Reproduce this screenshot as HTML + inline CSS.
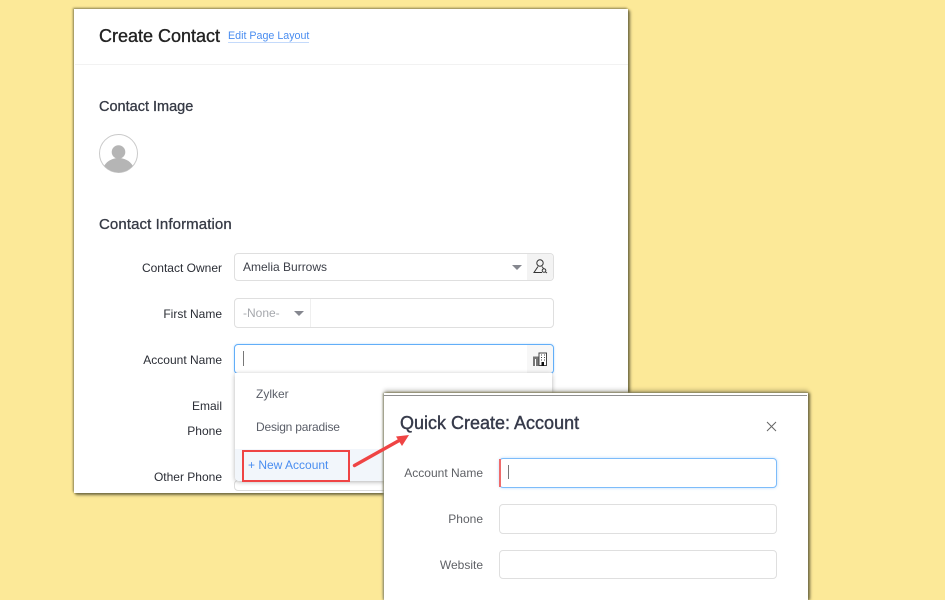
<!DOCTYPE html>
<html><head><meta charset="utf-8">
<style>
html,body{margin:0;padding:0;width:945px;height:600px;overflow:hidden;}
body{background:#fce998;position:relative;font-family:"Liberation Sans",sans-serif;}
.a{position:absolute;white-space:nowrap;}
.card{left:74px;top:9px;width:554px;height:484px;background:#fff;box-shadow:-1px -1px 2px #8d8454,1px 1px 2px #6f6840,2px 2px 3px #8d8454;}
.l{font-size:12px;color:#2a2d35;text-align:right;width:140px;left:82px;line-height:16px;}
.f{border:1px solid #dfdfdf;border-radius:4px;background:#fff;box-sizing:border-box;}
.h{color:#363a45;font-weight:400;-webkit-text-stroke:.3px #363a45;line-height:20px;}
.m{font-size:12px;color:#5a5e68;line-height:16px;}
.q{font-size:12px;color:#5f6166;text-align:right;width:100px;left:383px;line-height:16px;}
</style></head>
<body>
<div class="a card"></div>
<div class="a" style="left:99px;top:25px;font-size:18px;line-height:22px;color:#222;-webkit-text-stroke:.35px #222;">Create Contact</div>
<div class="a" style="left:228px;top:30px;font-size:10.7px;line-height:12px;color:#4a8df0;border-bottom:1px solid #c4dafb;">Edit Page Layout</div>
<div class="a" style="left:75px;top:64px;width:553px;height:1px;background:#f2f2f2;"></div>
<div class="a h" style="left:99px;top:97px;font-size:14.5px;">Contact Image</div>
<svg class="a" style="left:99px;top:134px;" width="39" height="39" viewBox="0 0 39 39">
<defs><clipPath id="c"><circle cx="19.5" cy="19.5" r="19"/></clipPath></defs>
<circle cx="19.5" cy="19.5" r="19" fill="#fff" stroke="#cacaca"/>
<g clip-path="url(#c)" fill="#b5b5b5"><circle cx="19.5" cy="18" r="6.8"/><ellipse cx="19.5" cy="38" rx="16" ry="14"/></g>
</svg>
<div class="a h" style="left:99px;top:215px;font-size:15px;letter-spacing:.1px;">Contact Information</div>

<div class="a l" style="top:260px;">Contact Owner</div>
<div class="a f" style="left:234px;top:253px;width:320px;height:28px;"></div>
<div class="a" style="left:527px;top:254px;width:26px;height:26px;background:#f3f3f3;border-radius:0 4px 4px 0;"></div>
<div class="a" style="left:243px;top:259px;font-size:12px;line-height:16px;color:#3c3f48;">Amelia Burrows</div>
<div class="a" style="left:512px;top:265px;width:0;height:0;border-left:5px solid transparent;border-right:5px solid transparent;border-top:5px solid #85878f;"></div>
<svg class="a" style="left:533px;top:259px;" width="15" height="16" viewBox="0 0 15 16" fill="none" stroke="#333" stroke-width="1">
<circle cx="7" cy="4" r="3.2"/><path d="M5 7.5 1 13.5H9M9 7.5l1.5 2"/><circle cx="11" cy="11.5" r="1.8"/><path d="M12.5 13l1.5 1"/>
</svg>

<div class="a l" style="top:306px;">First Name</div>
<div class="a f" style="left:234px;top:298px;width:320px;height:30px;"></div>
<div class="a" style="left:310px;top:299px;width:1px;height:28px;background:#efefef;"></div>
<div class="a" style="left:243px;top:305px;font-size:12px;line-height:16px;color:#a6a8ad;">-None-</div>
<div class="a" style="left:294px;top:311px;width:0;height:0;border-left:5px solid transparent;border-right:5px solid transparent;border-top:5px solid #85878f;"></div>

<div class="a l" style="top:352px;">Account Name</div>
<div class="a f" style="left:234px;top:344px;width:320px;height:30px;border-color:#62aef8;box-shadow:0 0 2px #bcdcfc;"></div>
<div class="a" style="left:527px;top:345px;width:26px;height:28px;background:#f7f7f7;border-radius:0 4px 4px 0;"></div>
<div class="a" style="left:243px;top:351px;width:1px;height:15px;background:#777;"></div>
<svg class="a" style="left:533px;top:352px;" width="14" height="14" viewBox="0 0 14 14">
<rect x="0" y="4.5" width="6" height="9.5" fill="#777"/><rect x="6" y="1" width="7.5" height="12.5" fill="#fff" stroke="#444"/>
<path d="M8 3h1M11 3h1M8 5.5h1M11 5.5h1M8 8h1M11 8h1" stroke="#444"/><rect x="8.5" y="10" width="2.5" height="4" fill="#111"/><path d="M2.5 7v7" stroke="#fff"/>
</svg>

<div class="a l" style="top:398px;">Email</div>
<div class="a l" style="top:423px;">Phone</div>
<div class="a l" style="top:469px;">Other Phone</div>

<div class="a f" style="left:234px;top:480px;width:320px;height:11px;border-color:#dcdcdc;"></div>
<div class="a" style="left:235px;top:373px;width:317px;height:108px;background:#fff;border-radius:0 0 4px 4px;box-shadow:0 1px 5px rgba(0,0,0,.3);"></div>
<div class="a" style="left:235px;top:449px;width:317px;height:32px;background:#f2f6fb;border-radius:0 0 4px 4px;"></div>
<div class="a m" style="left:256px;top:386px;">Zylker</div>
<div class="a m" style="left:256px;top:419px;letter-spacing:-.2px;">Design paradise</div>
<div class="a" style="left:248px;top:457px;font-size:12px;line-height:16px;color:#4a8df0;">+ New Account</div>
<div class="a" style="left:242px;top:450px;width:108px;height:32px;border:2px solid #ef4444;box-sizing:border-box;"></div>

<div class="a" style="left:384px;top:393px;width:424px;height:207px;background:#fff;box-shadow:-1px 0 2px #8a8a70,1px 0 2px #6f6840,2px 0 3px #8d8454,0 -3px 4px rgba(0,0,0,.22);"></div>
<div class="a" style="left:384px;top:395px;width:423px;height:1px;background:#8f8f8f;"></div>
<div class="a" style="left:400px;top:412px;font-size:18px;line-height:22px;color:#363a4a;-webkit-text-stroke:.4px #363a4a;">Quick Create: Account</div>
<svg class="a" style="left:766px;top:421px;" width="11" height="11" viewBox="0 0 11 11"><path d="M1 1l9 9M10 1l-9 9" stroke="#666" stroke-width="1" fill="none"/></svg>

<div class="a q" style="top:465px;">Account Name</div>
<div class="a f" style="left:499px;top:458px;width:278px;height:30px;border-color:#7dbcfa;box-shadow:0 0 3px #bcdcfc;"></div>
<div class="a" style="left:499px;top:459px;width:2px;height:28px;background:#ef6b6b;"></div>
<div class="a" style="left:508px;top:465px;width:1px;height:14px;background:#777;"></div>
<div class="a q" style="top:511px;">Phone</div>
<div class="a f" style="left:499px;top:504px;width:278px;height:30px;"></div>
<div class="a q" style="top:557px;">Website</div>
<div class="a f" style="left:499px;top:550px;width:278px;height:29px;"></div>

<svg class="a" style="left:350px;top:402px;" width="62" height="66" viewBox="0 0 62 66">
<path d="M4.5 63.5 50 38" stroke="#ef4444" stroke-width="3.4" stroke-linecap="round" fill="none"/>
<path d="M59 33 46 34.5 52 44Z" fill="#ef4444"/>
</svg>
</body></html>
